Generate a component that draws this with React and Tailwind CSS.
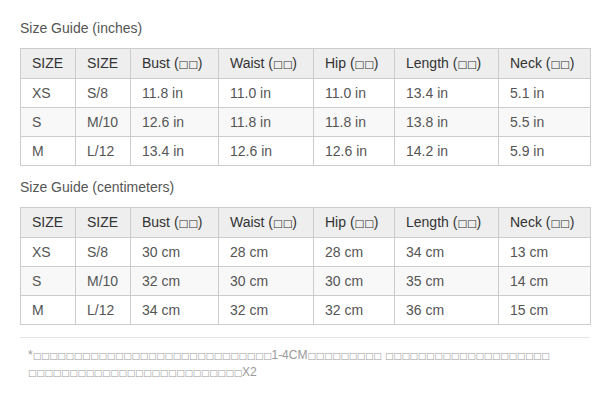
const b = (n) => (
  <span className="font-['DejaVu_Sans',sans-serif] text-[0.75em] leading-none tracking-[-0.03em]">
    {"□".repeat(n)}
  </span>
);

const COLS = ["w-[55px]", "w-[55px]", "w-[88px]", "w-[95px]", "w-[81px]", "w-[104px]", "w-[92px]"];
const HEAD = [
  "SIZE",
  "SIZE",
  <>Bust ({b(2)})</>,
  <>Waist ({b(2)})</>,
  <>Hip ({b(2)})</>,
  <>Length ({b(2)})</>,
  <>Neck ({b(2)})</>,
];

const INCHES = [
  ["XS", "S/8", "11.8 in", "11.0 in", "11.0 in", "13.4 in", "5.1 in"],
  ["S", "M/10", "12.6 in", "11.8 in", "11.8 in", "13.8 in", "5.5 in"],
  ["M", "L/12", "13.4 in", "12.6 in", "12.6 in", "14.2 in", "5.9 in"],
];

const CM = [
  ["XS", "S/8", "30 cm", "28 cm", "28 cm", "34 cm", "13 cm"],
  ["S", "M/10", "32 cm", "30 cm", "30 cm", "35 cm", "14 cm"],
  ["M", "L/12", "34 cm", "32 cm", "32 cm", "36 cm", "15 cm"],
];

function Tabla({ rows }) {
  return (
    <table className="w-[571px] table-fixed border-collapse text-[14px] leading-[19px]">
      <colgroup>
        {COLS.map((c, i) => (
          <col key={i} className={c} />
        ))}
      </colgroup>
      <thead>
        <tr className="h-[30px] bg-[#eeeeee]">
          {HEAD.map((h, i) => (
            <th key={i} className="border border-[#cccccc] px-[11px] text-left font-normal text-[#333]">
              {h}
            </th>
          ))}
        </tr>
      </thead>
      <tbody>
        {rows.map((r, i) => (
          <tr key={i} className={`h-[29px] ${i === 1 ? "bg-[#f8f8f8]" : "bg-white"}`}>
            {r.map((v, j) => (
              <td key={j} className="border border-[#cccccc] px-[11px] text-[#555]">
                {v}
              </td>
            ))}
          </tr>
        ))}
      </tbody>
    </table>
  );
}

export default function App() {
  return (
    <div className="w-[610px] h-[414px] bg-white px-[20px] pt-[18px] font-['Liberation_Sans',Arial,sans-serif]">
      <h3 className="text-[14px] leading-[20px] text-[#555] font-normal mb-[10px]">Size Guide (inches)</h3>
      <Tabla rows={INCHES} />

      <h3 className="text-[14px] leading-[20px] text-[#555] font-normal mt-[11px] mb-[10px]">
        Size Guide (centimeters)
      </h3>
      <Tabla rows={CM} />

      <div className="mt-[12px] w-[570px] border-t border-[#e5e5e5]" />
      <p className="mt-[9px] pl-[8px] text-[12px] leading-[17px] text-[#999]">
        *{b(29)}1-4CM{b(9)} {b(20)}
        <br />
        {b(26)}X2
      </p>
    </div>
  );
}
